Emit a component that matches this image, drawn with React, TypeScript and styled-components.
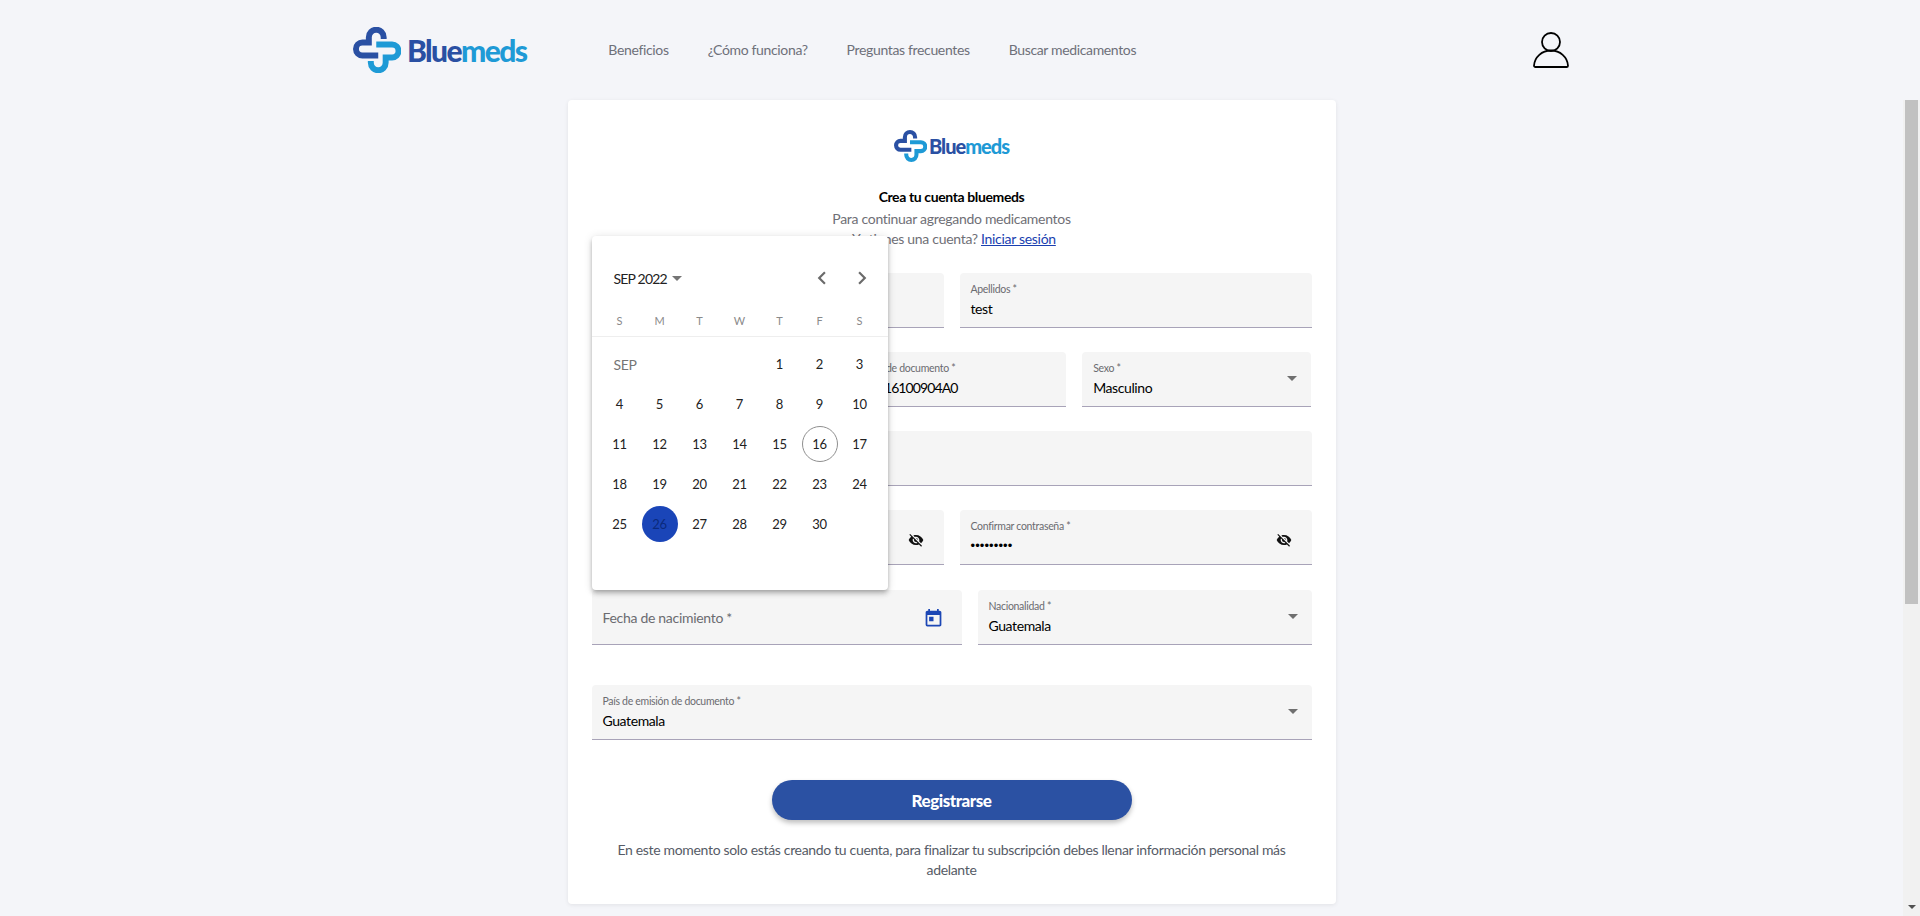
import React from "react";
import styled, { createGlobalStyle } from "styled-components";
import { MdVisibilityOff, MdToday, MdChevronLeft, MdChevronRight } from "react-icons/md";

const FONT = `"Lato", "Noto Sans", sans-serif`;

const GlobalStyle = createGlobalStyle`
  html, body { margin: 0; padding: 0; height: 100%; overflow: hidden; }
  body { background: #f4f5f9; font-family: ${FONT}; font-size: 14px; color: #000; }
  * { box-sizing: border-box; }
`;

const Page = styled.div`
  display: flex;
  flex-direction: column;
  height: 916px;
  overflow: hidden;
`;

const Header = styled.header`
  flex: 0 0 100px;
  display: flex;
  justify-content: center;
`;

const HeaderInner = styled.div`
  width: 1218px;
  display: flex;
  align-items: center;
`;

const Nav = styled.nav`
  display: flex;
  gap: 39px;
  margin-left: 82px;
  margin-bottom: 2px;
  flex: 1;
`;

const NavLink = styled.a`
  font-size: 14px;
  letter-spacing: -0.35px;
  color: #6e7079;
`;

const LogoWrap = styled.div<{ $small?: boolean }>`
  display: flex;
  align-items: center;
  gap: ${(p) => (p.$small ? "2px" : "6px")};
  justify-content: ${(p) => (p.$small ? "center" : "flex-start")};
  height: ${(p) => (p.$small ? "32px" : "46px")};
  padding-left: ${(p) => (p.$small ? "0" : "2px")};
`;

const LogoText = styled.span<{ $small?: boolean }>`
  font-weight: 900;
  font-size: ${(p) => (p.$small ? "20px" : "30px")};
  letter-spacing: ${(p) => (p.$small ? "-1px" : "-1.6px")};
  color: #2a50a3;
  b { font-weight: 900; color: #1e9ad6; }
`;

const Body = styled.div`
  flex: 1;
  display: flex;
  min-height: 0;
`;

const Main = styled.main`
  flex: 1;
  display: flex;
  justify-content: center;
  align-items: flex-start;
`;

const ScrollTrack = styled.div`
  flex: 0 0 17px;
  background: #f1f1f1;
  display: flex;
  flex-direction: column;
  align-items: center;
  justify-content: space-between;
  padding-bottom: 7px;
`;

const ScrollThumb = styled.div`
  width: 13px;
  height: 504px;
  background: #c1c1c1;
`;

const ScrollArrow = styled.div`
  width: 0;
  height: 0;
  border-left: 4px solid transparent;
  border-right: 4px solid transparent;
  border-top: 4px solid #505050;
`;

const Card = styled.section`
  width: 768px;
  height: 804px;
  background: #fff;
  border-radius: 4px;
  padding: 30px 24px 23px;
  box-shadow: 0 1px 4px rgba(0, 0, 0, 0.08);
`;

const Title = styled.h1`
  margin: 24px 0 0;
  font-size: 14px;
  line-height: 22px;
  font-weight: 700;
  letter-spacing: -0.38px;
  text-align: center;
`;

const Sub = styled.p<{ $tight?: boolean }>`
  margin: 0;
  font-size: 14px;
  line-height: ${(p) => (p.$tight ? "20px" : "21px")};
  letter-spacing: -0.3px;
  text-align: center;
  color: #6f6f76;
`;

const SignIn = styled.a`
  color: #1a3fb0;
  text-decoration: underline;
`;

const Form = styled.div`
  margin-top: 24px;
  display: flex;
  flex-direction: column;
  gap: 24px;
`;

const Row = styled.div<{ $cols: string; $top?: number }>`
  display: grid;
  grid-template-columns: ${(p) => p.$cols};
  column-gap: 16px;
  margin-top: ${(p) => p.$top ?? 0}px;
`;

const FieldBox = styled.div`
  position: relative;
  height: 55px;
  background: #f5f5f5;
  border-radius: 4px 4px 0 0;
  border-bottom: 1px solid #a8a3b8;
  padding: 10px 11px 0;
`;

const FieldLabel = styled.div`
  font-size: 10.5px;
  line-height: 13px;
  letter-spacing: -0.3px;
  color: #6b6b70;
`;

const FieldValue = styled.div`
  margin-top: 4px;
  font-size: 14px;
  line-height: 18px;
  letter-spacing: -0.4px;
  color: #000;
`;

const DocValue = styled(FieldValue)`
  letter-spacing: -0.9px;
`;

const Dots = styled(FieldValue)`
  letter-spacing: 0.1px;
  font-family: "Liberation Sans", sans-serif;
  font-size: 13px;
`;

const EmptyLabel = styled.div`
  margin-top: 8px;
  font-size: 14px;
  line-height: 20px;
  letter-spacing: -0.3px;
  color: #6b6b70;
`;

const Arrow = styled.span`
  position: absolute;
  right: 14px;
  top: 24px;
  width: 0;
  height: 0;
  border-left: 5px solid transparent;
  border-right: 5px solid transparent;
  border-top: 5px solid #6f6f6f;
`;

const EyeIcon = styled.span`
  position: absolute;
  right: 20px;
  top: 22px;
  display: flex;
  font-size: 16px;
  color: #111;
`;

const CalendarIcon = styled.span`
  position: absolute;
  right: 18px;
  top: 18px;
  display: flex;
  font-size: 21px;
  color: #1c47b5;
`;

const DateCell = styled.div`
  position: relative;
`;

const Popup = styled.div`
  position: absolute;
  z-index: 5;
  left: 0;
  bottom: 100%;
  width: 296px;
  height: 354px;
  background: #fff;
  border-radius: 4px;
  padding: 26px 8px 0;
  box-shadow: 0 2px 4px -1px rgba(0, 0, 0, 0.2), 0 4px 5px 0 rgba(0, 0, 0, 0.14), 0 1px 10px 0 rgba(0, 0, 0, 0.12);
`;

const PopupControls = styled.div`
  display: flex;
  align-items: center;
  height: 32px;
  padding-left: 14px;
  margin-right: -2px;
`;

const MonthButton = styled.div`
  display: flex;
  align-items: center;
  gap: 5px;
  flex: 1;
  font-size: 14px;
  letter-spacing: -0.8px;
  color: #222;
`;

const MonthCaret = styled.span`
  width: 0;
  height: 0;
  border-left: 5px solid transparent;
  border-right: 5px solid transparent;
  border-top: 5px solid #757575;
`;

const PagerIcon = styled.span`
  display: flex;
  width: 40px;
  justify-content: center;
  font-size: 26px;
  color: #6b6b6b;
`;

const WeekHead = styled.div`
  display: grid;
  grid-template-columns: repeat(7, 40px);
  height: 43px;
  margin: 0 -8px;
  padding: 11px 8px 0;
  align-items: center;
  border-bottom: 1px solid #eee;
`;

const WeekDay = styled.span`
  text-align: center;
  font-size: 11px;
  color: #8a8a8a;
`;

const DayGrid = styled.div`
  display: grid;
  grid-template-columns: repeat(7, 40px);
  grid-auto-rows: 40px;
  margin-top: 7px;
`;

const MonthTag = styled.span`
  grid-column: span 4;
  display: flex;
  align-items: center;
  padding-left: 14px;
  font-size: 14px;
  letter-spacing: -0.4px;
  color: #757575;
`;

const Day = styled.span<{ $today?: boolean; $selected?: boolean }>`
  display: flex;
  align-items: center;
  justify-content: center;
  margin: 2px;
  border-radius: 50%;
  font-size: 13px;
  letter-spacing: -0.2px;
  color: ${(p) => (p.$selected ? "#0b2a7d" : "#222")};
  background: ${(p) => (p.$selected ? "#1a45b8" : "transparent")};
  border: ${(p) => (p.$today ? "1px solid #8f8f8f" : "none")};
`;

const Actions = styled.div`
  display: flex;
  justify-content: center;
  margin-top: 40px;
`;

const Submit = styled.button`
  width: 360px;
  height: 40px;
  border: 0;
  border-radius: 20px;
  background: #2b51a3;
  color: #fff;
  font-family: ${FONT};
  font-size: 17px;
  font-weight: 900;
  letter-spacing: -0.45px;
  box-shadow: 0 3px 5px rgba(0, 0, 0, 0.25);
`;

const Note = styled.p`
  margin: 20px 0 0;
  padding: 0 20px;
  font-size: 14px;
  line-height: 20px;
  letter-spacing: -0.33px;
  text-align: center;
  color: #565b66;
`;

const UserSvg = styled.svg`
  width: 36px;
  height: 36px;
  flex: none;
`;

const Logo = ({ small }: { small?: boolean }) => (
  <LogoWrap $small={small}>
    <svg width={small ? 33 : 48} height={small ? 32 : 46} viewBox="-0.5 0 48.500 46" fill="none" strokeWidth="6">
      <path d="M30.500 12V10a7.500 7.500 0 0 0-15 0v5.500H9a6.500 6.500 0 0 0 0 13h16" stroke="#2a50a3" />
      <path d="M30.500 12V10a7.500 7.500 0 0 0-15 0v5.500H9a6.500 6.500 0 0 0 0 13h16" stroke="#1e9ad6" transform="rotate(180 24 23)" />
    </svg>
    <LogoText $small={small}>
      Blue<b>meds</b>
    </LogoText>
  </LogoWrap>
);

const Field = ({ label, value, children }: { label?: string; value?: string; children?: React.ReactNode }) => (
  <FieldBox>
    {label && <FieldLabel>{label}</FieldLabel>}
    {value && <FieldValue>{value}</FieldValue>}
    {children}
  </FieldBox>
);

const navItems = ["Beneficios", "¿Cómo funciona?", "Preguntas frecuentes", "Buscar medicamentos"];
const weekDays = ["S", "M", "T", "W", "T", "F", "S"];
const days = Array.from({ length: 30 }, (_, i) => i + 1);

const DatePopup = () => (
  <Popup>
    <PopupControls>
      <MonthButton>
        SEP 2022 <MonthCaret />
      </MonthButton>
      <PagerIcon>
        <MdChevronLeft />
      </PagerIcon>
      <PagerIcon>
        <MdChevronRight />
      </PagerIcon>
    </PopupControls>
    <WeekHead>
      {weekDays.map((d, i) => (
        <WeekDay key={i}>{d}</WeekDay>
      ))}
    </WeekHead>
    <DayGrid>
      <MonthTag>SEP</MonthTag>
      {days.map((d) => (
        <Day key={d} $today={d === 16} $selected={d === 26}>
          {d}
        </Day>
      ))}
    </DayGrid>
  </Popup>
);

export default function App() {
  return (
    <Page>
      <GlobalStyle />
      <Header>
        <HeaderInner>
          <Logo />
          <Nav>
            {navItems.map((n) => (
              <NavLink key={n}>{n}</NavLink>
            ))}
          </Nav>
          <UserSvg viewBox="0 0 36 36" fill="none" stroke="#000" strokeWidth="1.800">
            <circle cx="18" cy="10" r="9" />
            <path d="M2.500 35c-1 0-1.500-.6-1.500-1.300C1.500 25 9 18.500 18 18.500s16.500 6.500 17 15.200c0 .7-.5 1.300-1.500 1.300Z" />
          </UserSvg>
        </HeaderInner>
      </Header>
      <Body>
        <Main>
          <Card>
            <Logo small />
            <Title>Crea tu cuenta bluemeds</Title>
            <Sub>Para continuar agregando medicamentos</Sub>
            <Sub $tight>
              ¿Ya tienes una cuenta? <SignIn>Iniciar sesión</SignIn>
            </Sub>
            <Form>
              <Row $cols="1fr 1fr">
                <Field />
                <Field label="Apellidos *" value="test" />
              </Row>
              <Row $cols="repeat(3, 1fr)">
                <Field />
                <Field label="Número de documento *">
                  <DocValue>1234016100904A0</DocValue>
                </Field>
                <Field label="Sexo *" value="Masculino">
                  <Arrow />
                </Field>
              </Row>
              <Row $cols="1fr">
                <Field />
              </Row>
              <Row $cols="1fr 1fr">
                <Field>
                  <EyeIcon>
                    <MdVisibilityOff />
                  </EyeIcon>
                </Field>
                <Field label="Confirmar contraseña *">
                  <Dots>•••••••••</Dots>
                  <EyeIcon>
                    <MdVisibilityOff />
                  </EyeIcon>
                </Field>
              </Row>
              <Row $cols="370px 1fr" $top={1}>
                <DateCell>
                  <DatePopup />
                  <FieldBox>
                    <EmptyLabel>Fecha de nacimiento *</EmptyLabel>
                    <CalendarIcon>
                      <MdToday />
                    </CalendarIcon>
                  </FieldBox>
                </DateCell>
                <Field label="Nacionalidad *" value="Guatemala">
                  <Arrow />
                </Field>
              </Row>
              <Row $cols="1fr" $top={16}>
                <Field label="País de emisión de documento *" value="Guatemala">
                  <Arrow />
                </Field>
              </Row>
            </Form>
            <Actions>
              <Submit>Registrarse</Submit>
            </Actions>
            <Note>En este momento solo estás creando tu cuenta, para finalizar tu subscripción debes llenar información personal más adelante</Note>
          </Card>
        </Main>
        <ScrollTrack>
          <ScrollThumb />
          <ScrollArrow />
        </ScrollTrack>
      </Body>
    </Page>
  );
}
